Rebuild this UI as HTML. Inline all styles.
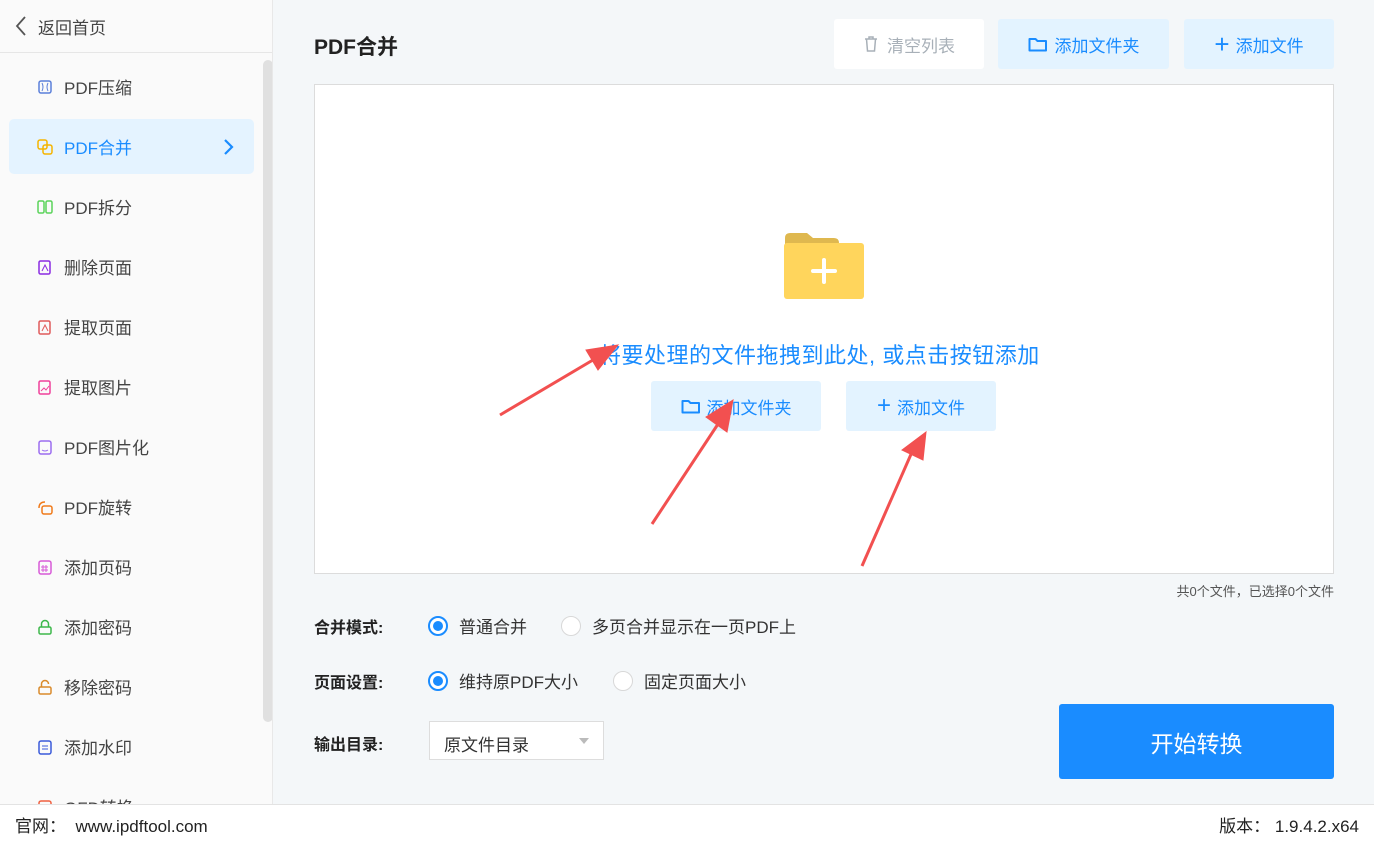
<!DOCTYPE html>
<html><head><meta charset="utf-8"><style>
*{box-sizing:border-box;margin:0;padding:0}
body{width:1374px;height:844px;overflow:hidden;background:#f4f7f9;font-family:"Liberation Sans","Noto Sans CJK SC",sans-serif;position:relative;color:#333}
.side{position:absolute;left:0;top:0;width:273px;height:804px;background:#fafafa;border-right:1px solid #e8e8e8;overflow:hidden}
.back{height:53px;border-bottom:1px solid #e6e6e6;display:flex;align-items:center;padding-left:14px;font-size:17px;color:#444}
.item{position:absolute;left:9px;width:245px;height:55px;display:flex;align-items:center;padding-left:28px;font-size:17px;color:#444}
.item svg{margin-right:11px}
.item.act{background:#e4f3ff;color:#1a8cff;border-radius:5px}
.sb{position:absolute;left:263px;top:60px;width:10px;height:662px;background:#e0e0e0;border-radius:5px}
.foot{position:absolute;left:0;top:804px;width:1374px;height:40px;background:#fff;border-top:1px solid #e3e3e3;font-size:17px;color:#222;display:flex;align-items:center;justify-content:space-between;padding:0 15px}
.btn{position:absolute;height:50px;display:flex;align-items:center;justify-content:center;font-size:17px;border-radius:3px}
.blue{background:#e3f3ff;color:#1a8cff}
.drop{position:absolute;left:314px;top:84px;width:1020px;height:490px;background:#fff;border:1px solid #dcdcdc}
.lbl{position:absolute;font-size:16px;font-weight:bold;color:#222}
.r{position:absolute;font-size:17px;color:#333;display:flex;align-items:center}
.rad{width:20px;height:20px;border-radius:50%;border:1.5px solid #d8d8d8;background:#fff;margin-right:11px;position:relative}
.rad.on{border:2px solid #1a8cff}
.rad.on::after{content:"";position:absolute;left:3px;top:3px;width:10px;height:10px;border-radius:50%;background:#1a8cff}
</style></head><body>
<div class="side">
<div class="back"><svg width="14" height="22" viewBox="0 0 14 22"><path d="M11 2 L3 11 L11 20" fill="none" stroke="#555" stroke-width="1.8"/></svg><span style="margin-left:10px">返回首页</span></div>
<div class="item" style="top:59px"><svg width="16" height="16"><rect x="2" y="2" width="12" height="12" rx="2" fill="none" stroke="#5b7fd9" stroke-width="1.5"/><path d="M5 4q2 4 0 8M11 4q-2 4 0 8" stroke="#5b7fd9" fill="none"/></svg>PDF压缩</div>
<div class="item act" style="top:119px"><svg width="16" height="16"><rect x="1" y="1" width="9" height="9" rx="2" fill="none" stroke="#f5b400" stroke-width="1.5"/><rect x="6" y="6" width="9" height="9" rx="2" fill="none" stroke="#f5b400" stroke-width="1.5"/></svg>PDF合并<svg style="position:absolute;right:20px;margin:0" width="12" height="18"><path d="M3 2l7 7-7 7" fill="none" stroke="#1a8cff" stroke-width="2.2"/></svg></div>
<div class="item" style="top:179px"><svg width="16" height="16"><rect x="1" y="2" width="6" height="12" rx="1.5" fill="none" stroke="#5ad35a" stroke-width="1.5"/><rect x="9" y="2" width="6" height="12" rx="1.5" fill="none" stroke="#5ad35a" stroke-width="1.5"/></svg>PDF拆分</div>
<div class="item" style="top:239px"><svg width="16" height="16"><rect x="2" y="2" width="11" height="13" rx="1.5" fill="none" stroke="#8a2be2" stroke-width="1.5"/><path d="M5 12l3-6 3 6" stroke="#8a2be2" fill="none"/></svg>删除页面</div>
<div class="item" style="top:299px"><svg width="16" height="16"><rect x="2" y="2" width="11" height="13" rx="1.5" fill="none" stroke="#e05a5a" stroke-width="1.5"/><path d="M5 12l3-6 3 6" stroke="#e05a5a" fill="none"/></svg>提取页面</div>
<div class="item" style="top:359px"><svg width="16" height="16"><rect x="2" y="2" width="11" height="13" rx="1.5" fill="none" stroke="#f0409a" stroke-width="1.5"/><path d="M4 12l3-3 2 2 3-4" stroke="#f0409a" fill="none"/></svg>提取图片</div>
<div class="item" style="top:419px"><svg width="16" height="16"><rect x="2" y="2" width="12" height="13" rx="2" fill="none" stroke="#9b6cf0" stroke-width="1.5"/><path d="M5 11q3 2 6 0" stroke="#9b6cf0" fill="none"/></svg>PDF图片化</div>
<div class="item" style="top:479px"><svg width="16" height="16"><rect x="5" y="7" width="10" height="8" rx="2" fill="none" stroke="#f07a1a" stroke-width="1.5"/><path d="M2 9q0-6 6-6" stroke="#f07a1a" fill="none" stroke-width="1.5"/></svg>PDF旋转</div>
<div class="item" style="top:539px"><svg width="16" height="16"><rect x="2" y="2" width="12" height="13" rx="2" fill="none" stroke="#d85ad8" stroke-width="1.5"/><path d="M6 6v7M9 6v7M4 8h7M4 11h7" stroke="#d85ad8"/></svg>添加页码</div>
<div class="item" style="top:599px"><svg width="16" height="16"><rect x="2" y="8" width="12" height="7" rx="1.5" fill="none" stroke="#3cb84a" stroke-width="1.5"/><path d="M4.5 8V5a3.5 3.5 0 017 0v3" stroke="#3cb84a" fill="none" stroke-width="1.5"/></svg>添加密码</div>
<div class="item" style="top:659px"><svg width="16" height="16"><rect x="2" y="8" width="12" height="7" rx="1.5" fill="none" stroke="#d98a2a" stroke-width="1.5"/><path d="M4.5 8V5a3.5 3.5 0 017 0" stroke="#d98a2a" fill="none" stroke-width="1.5"/></svg>移除密码</div>
<div class="item" style="top:719px"><svg width="16" height="16"><rect x="2" y="2" width="12" height="13" rx="2" fill="none" stroke="#3a5ad9" stroke-width="1.5"/><path d="M5 7h6M5 10h6" stroke="#3a5ad9"/></svg>添加水印</div>
<div class="item" style="top:779px"><svg width="16" height="16"><rect x="2" y="2" width="12" height="13" rx="2" fill="none" stroke="#f06040" stroke-width="1.5"/></svg>OFD转换</div>
<div class="sb"></div>
</div>
<div style="position:absolute;left:314px;top:31px;font-size:21px;font-weight:bold;color:#222">PDF合并</div>
<div class="btn" style="left:834px;top:19px;width:150px;background:#fff;color:#a8b0b8"><svg width="16" height="18" style="margin-right:8px"><path d="M2 4h12M6 4V2h4v2M3.5 4l1 12h7l1-12" fill="none" stroke="#a8b0b8" stroke-width="1.5"/></svg>清空列表</div>
<div class="btn blue" style="left:998px;top:19px;width:171px"><svg width="20" height="16" style="margin-right:7px"><path d="M1.5 3h6l2 2h8.5v9.5h-16.5z" fill="none" stroke="#1a8cff" stroke-width="2" stroke-linejoin="round"/></svg>添加文件夹</div>
<div class="btn blue" style="left:1184px;top:19px;width:150px"><span style="font-size:26px;margin-right:6px;font-weight:300">+</span>添加文件</div>
<div class="drop"></div>
<svg style="position:absolute;left:783px;top:232px" width="82" height="68"><path d="M2 6q0-5 5-5h17l6 5h21q5 0 5 5v8H2z" fill="#dfb84f"/><rect x="1" y="11" width="80" height="56" rx="3" fill="#ffd55c"/><path d="M41 28v22M30 39h22" stroke="#fff" stroke-width="4" stroke-linecap="round"/></svg>
<div style="position:absolute;left:599px;top:338px;font-size:22px;letter-spacing:0.5px;color:#1a8cff;white-space:nowrap">将要处理的文件拖拽到此处, 或点击按钮添加</div>
<div class="btn blue" style="left:651px;top:381px;width:170px"><svg width="20" height="16" style="margin-right:6px"><path d="M1.5 3h6l2 2h8.5v9.5h-16.5z" fill="none" stroke="#1a8cff" stroke-width="2" stroke-linejoin="round"/></svg>添加文件夹</div>
<div class="btn blue" style="left:846px;top:381px;width:150px"><span style="font-size:24px;margin-right:6px;font-weight:300">+</span>添加文件</div>
<svg style="position:absolute;left:0;top:0" width="1374" height="844">
<g fill="#f25050" stroke="#f25050">
<line x1="500" y1="415" x2="598" y2="357" stroke-width="3"/><polygon points="618,345 586,350 598,370"/>
<line x1="652" y1="524" x2="722" y2="418" stroke-width="3"/><polygon points="733,400 706,417 727,432"/>
<line x1="862" y1="566" x2="912" y2="452" stroke-width="3"/><polygon points="926,432 902,450 923,460"/>
</g></svg>
<div style="position:absolute;right:40px;top:581px;font-size:13px;color:#555">共0个文件，已选择0个文件</div>
<div class="lbl" style="left:314px;top:614px">合并模式:</div>
<div class="r" style="left:428px;top:613px"><span class="rad on"></span>普通合并</div>
<div class="r" style="left:561px;top:613px"><span class="rad"></span>多页合并显示在一页PDF上</div>
<div class="lbl" style="left:314px;top:669px">页面设置:</div>
<div class="r" style="left:428px;top:668px"><span class="rad on"></span>维持原PDF大小</div>
<div class="r" style="left:613px;top:668px"><span class="rad"></span>固定页面大小</div>
<div class="lbl" style="left:314px;top:731px">输出目录:</div>
<div style="position:absolute;left:429px;top:721px;width:175px;height:39px;background:#fff;border:1px solid #ddd;font-size:17px;padding:9px 0 0 14px">原文件目录<span style="position:absolute;right:14px;top:16px;border:5px solid transparent;border-top:6px solid #bbb"></span></div>
<div class="btn" style="left:1059px;top:704px;width:275px;height:75px;background:#1a8cff;color:#fff;font-size:23px">开始转换</div>
<div class="foot"><span>官网：&nbsp; www.ipdftool.com</span><span>版本：&nbsp;1.9.4.2.x64</span></div>
</body></html>
